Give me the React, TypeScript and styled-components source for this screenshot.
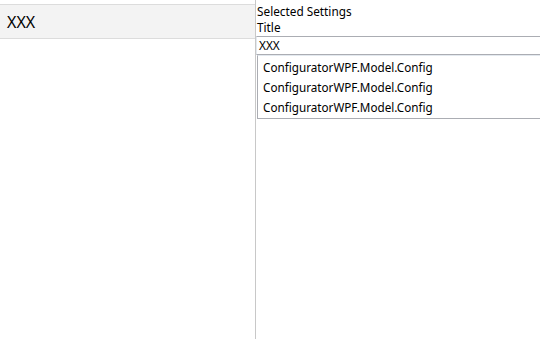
import styled, { createGlobalStyle } from 'styled-components';

const GlobalStyle = createGlobalStyle`
  html, body {
    margin: 0;
    padding: 0;
    background: #ffffff;
  }
  body {
    font-family: "Noto Sans", "Open Sans", sans-serif;
    color: #000000;
  }
`;

const Window = styled.div`
  display: grid;
  grid-template-columns: 256px 1fr;
  width: 540px;
  height: 339px;
  overflow: hidden;
`;

const LeftPane = styled.div`
  padding-top: 4px;
  border-right: 1px solid #c8c8c8;
`;

const Row = styled.div`
  height: 33px;
  display: flex;
  align-items: center;
  padding-left: 7px;
  background: #f3f3f3;
  border-top: 1px solid #dcdcdc;
  border-bottom: 1px solid #dcdcdc;
  font-size: 16px;
`;

const RightPane = styled.div`
  display: flex;
  flex-direction: column;
  padding-top: 3px;
`;

const Label = styled.div`
  font-size: 11.8px;
  line-height: 16px;
  padding-left: 1px;
`;

const TextBox = styled.div`
  height: 17px;
  border: 1px solid #abadb3;
  border-right: none;
  border-left-color: #e3e9ef;
  font-size: 11.8px;
  line-height: 17px;
  padding-left: 2px;
  margin-top: 1px;
`;

const ListBox = styled.div`
  display: flex;
  flex-direction: column;
  padding: 1px 0 1px;
  border: 1px solid #abadb3;
  border-right: none;
  border-top-color: #e3e9ef;
  margin-left: 1px;
`;

const Item = styled.div`
  height: 20px;
  line-height: 20px;
  font-size: 11.7px;
  padding-left: 5px;
`;

const items = [
  'ConfiguratorWPF.Model.Config',
  'ConfiguratorWPF.Model.Config',
  'ConfiguratorWPF.Model.Config',
];

export default function App() {
  return (
    <>
      <GlobalStyle />
      <Window>
        <LeftPane>
          <Row>XXX</Row>
        </LeftPane>
        <RightPane>
          <Label>Selected Settings</Label>
          <Label>Title</Label>
          <TextBox>XXX</TextBox>
          <ListBox>
            {items.map((item, i) => (
              <Item key={i}>{item}</Item>
            ))}
          </ListBox>
        </RightPane>
      </Window>
    </>
  );
}
